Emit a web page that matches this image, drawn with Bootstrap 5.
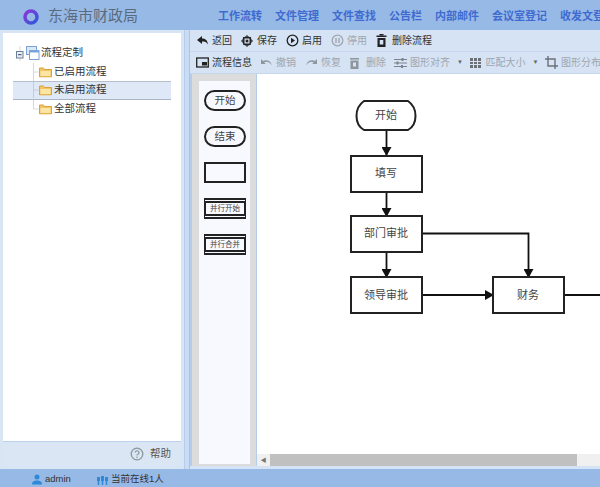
<!DOCTYPE html>
<html lang="zh-CN">
  <head>
    <meta charset="UTF-8" />
    <meta name="viewport" content="width=device-width, initial-scale=1" />
    <title>东海市财政局</title>
    <link href="https://cdn.jsdelivr.net/npm/bootstrap@5.3.3/dist/css/bootstrap.min.css" rel="stylesheet" />
    <style>
      html, body { height: 100%; overflow: hidden; }
      body { font-family: "Liberation Sans", "Noto Sans CJK SC", sans-serif; font-size: 10.5px; color: #333; background: #97b9e6; }
      .app-shell { width: 600px; height: 487px; }
      .top-bar { height: 30px; padding-top: 3px; background: #97b9e6; white-space: nowrap; }
      .logo-ring { width: 16px; height: 16px; margin-left: 23px; flex: none; }
      .site-title { width: 90px; margin-left: 9px; margin-right: 80px; flex: none; font-size: 15px; color: #5a6b80; }
      .top-links { gap: 13px; }
      .top-links a { color: #3f6bd0; font-size: 11px; font-weight: 700; text-decoration: none; }
      .work-area { height: 439px; }
      .side-panel { width: 185px; padding: 3px 3px 3px 3px; background: #d8e5f5; border-right: 1px solid #b5cdec; }
      .tree-box { background: #fff; padding-top: 11px; }
      .tree-row { height: 18.5px; padding-left: 29px; }
      .tree-root { padding-left: 13px; }
      .tree-on { background: #dfe8f6; border-top: 1px solid #b6bfcc; border-bottom: 1px solid #a9b4c4; margin-left: 10px; margin-right: 10px; padding-left: 19px; }
      .tree-row svg { flex: none; }
      .help-bar { height: 25px; background: #dbe6f4; border-top: 1px solid #bdd2ec; padding-right: 10px; color: #555; gap: 6px; }
      .split-bar { width: 5px; background: #c9dcf3; border-right: 1px solid #a8c4e8; }
      .main-panel { width: 410px; background: #d5e3f4; padding-bottom: 3px; }
      .tool-row { height: 22px; flex: none; background: #d5e3f4; border-bottom: 1px solid #c4d7ef; padding-left: 6px; white-space: nowrap; overflow: hidden; font-size: 10px; }
      .tool-item { display: inline-flex; align-items: center; flex: none; color: #333; }
      .tool-two { width: 45px; }
      .tool-four { width: 64px; }
      .tool-trash { width: 44px; }
      .tool-menu { width: 75.500px; }
      .tool-glyph { display: inline-flex; align-items: center; width: 16px; flex: none; }
      .tool-off { color: #a0a6ae; }
      .caret-mini { font-size: 6px; color: #666; margin-left: 7px; }
      .flow-body { min-height: 0; }
      .palette-col { width: 66px; flex: none; padding: 7px 6px 2px 7px; background: #dcdcdc; border-left: 2px solid #b5cdec; }
      .palette-inner { background: #f8f9fe; padding-top: 9px; gap: 15px; }
      .shape-item { width: 42px; height: 21px; margin-left: 5px; border: 2px solid #222; background: #f8f9fe; color: #444; font-size: 10.5px; }
      .shape-round { border-radius: 11px; }
      .shape-bars { border-top: 5px double #222; border-bottom: 5px double #222; font-size: 7.500px; white-space: nowrap; }
      .canvas-col { background: #fff; border-left: 1px solid #b5cdec; min-width: 0; }
      .canvas-col svg { display: block; }
      .canvas-col text { font-family: "Liberation Sans", "Noto Sans CJK SC", sans-serif; font-size: 11px; fill: #444; text-anchor: middle; }
      .scroll-line { height: 12px; flex: none; background: #f0f0f0; }
      .scroll-btn { width: 13px; font-size: 6px; color: #777; }
      .scroll-thumb { width: 307px; background: #c0c0c0; }
      .status-bar { height: 18px; padding: 3px 0 0 32px; background: #97b9e6; color: #333; font-size: 9.500px; white-space: nowrap; }
      .status-admin { width: 65px; gap: 3px; }
      .status-online { gap: 3px; }
      .status-bar svg { flex: none; }
    </style>
  </head>
  <body>
    <div class="app-shell d-flex flex-column">
      <div class="top-bar d-flex align-items-center">
        <svg class="logo-ring" viewBox="0 0 16 16"><defs><linearGradient id="ringGrad" x1="0" y1="0" x2="1" y2="1"><stop offset="0" stop-color="#8a35d8" /><stop offset="1" stop-color="#2f5bd8" /></linearGradient></defs><circle cx="8" cy="8" r="6" fill="none" stroke="url(#ringGrad)" stroke-width="3.500" /></svg>
        <span class="site-title">东海市财政局</span>
        <nav class="top-links d-flex">
          <a href="#">工作流转</a><a href="#">文件管理</a><a href="#">文件查找</a><a href="#">公告栏</a><a href="#">内部邮件</a><a href="#">会议室登记</a><a href="#">收发文登记</a>
        </nav>
      </div>

      <div class="work-area d-flex">
        <aside class="side-panel d-flex flex-column">
          <div class="tree-box flex-grow-1">
            <div class="tree-row tree-root d-flex align-items-center">
              <svg width="25" height="15" viewBox="0 0 25 15"><path d="M4 0v5M4 12v3" stroke="#d5d9de" /><rect x=".5" y="5.500" width="6.500" height="6.500" fill="#e8eef6" stroke="#6c7f96" /><path d="M2 8.700h3.500" stroke="#445" /><rect x="10.500" y=".5" width="10" height="8" fill="#dbe8f8" stroke="#7ba3da" /><rect x="13.500" y="4.500" width="9.500" height="9" fill="#fff" stroke="#7ba3da" /><path d="M13.500 5.500h9.500" stroke="#7ba3da" stroke-width="2" /></svg>
              <span>流程定制</span>
            </div>
            <div class="tree-row d-flex align-items-center">
              <svg width="22" height="18" viewBox="0 0 22 18"><path d="M1.500 0v18M1.500 9h5" stroke="#d5d9de" /><use href="#folderIcon" x="7" y="3.500" width="13" height="11" /></svg><span>已启用流程</span>
            </div>
            <div class="tree-row tree-on d-flex align-items-center">
              <svg width="22" height="16" viewBox="0 0 22 16"><path d="M1.500 0v16M1.500 8h5" stroke="#c6ccd6" /><use href="#folderIcon" x="7" y="2.500" width="13" height="11" /></svg><span>未启用流程</span>
            </div>
            <div class="tree-row d-flex align-items-center">
              <svg width="22" height="18" viewBox="0 0 22 18"><path d="M1.500 0v9M1.500 9h5" stroke="#d5d9de" /><use href="#folderIcon" x="7" y="3.500" width="13" height="11" /></svg><span>全部流程</span>
            </div>
          </div>
          <div class="help-bar d-flex align-items-center justify-content-end">
            <svg width="14" height="14" viewBox="0 0 14 14"><circle cx="7" cy="7" r="5.800" fill="none" stroke="#8d969f" stroke-width="1.300" /><path d="M5.200 5.500a1.900 1.800 0 1 1 2.700 1.700c-.6.300-.9.600-.9 1.200" fill="none" stroke="#8d969f" stroke-width="1.200" /><circle cx="7" cy="10.200" r=".8" fill="#8d969f" /></svg>
            <span>帮助</span>
          </div>
        </aside>
        <div class="split-bar"></div>

        <main class="main-panel d-flex flex-column">
          <div class="tool-row d-flex align-items-center">
            <span class="tool-item tool-two"><span class="tool-glyph"><svg width="13" height="11" viewBox="0 0 13 11"><path d="M1 5l5-4v2.500c3 0 5.500 1.500 6 6-1.500-2.500-3-3-6-3V9z" fill="#222" /></svg></span>返回</span>
            <span class="tool-item tool-two"><span class="tool-glyph"><svg width="12" height="12" viewBox="0 0 12 12"><circle cx="6" cy="6" r="4.800" fill="#222" /><path d="M6 0v12M0 6h12M2 2l8 8M10 2l-8 8" stroke="#222" stroke-dasharray="1.500 9" /><rect x="3.500" y="3.500" width="5" height="5" fill="#d5e3f4" /><rect x="4.700" y="4.700" width="2.600" height="2.600" fill="#222" /></svg></span>保存</span>
            <span class="tool-item tool-two"><span class="tool-glyph"><svg width="13" height="13" viewBox="0 0 13 13"><circle cx="6.500" cy="6.500" r="5.300" fill="none" stroke="#222" stroke-width="1.300" /><path d="M5 3.800l4 2.700-4 2.700z" fill="#222" /></svg></span>启用</span>
            <span class="tool-item tool-two tool-off"><span class="tool-glyph"><svg width="13" height="13" viewBox="0 0 13 13"><circle cx="6.500" cy="6.500" r="5.300" fill="none" stroke="#a0a6ae" stroke-width="1.300" /><path d="M5 4v5M8 4v5" stroke="#a0a6ae" stroke-width="1.400" /></svg></span>停用</span>
            <span class="tool-item"><span class="tool-glyph"><svg width="11" height="13" viewBox="0 0 11 13"><path d="M.5 1.500h10v1.500H.5zM1.500 4h8v9h-8z" fill="#222" /><rect x="3.700" y="6" width="3.600" height="4.500" fill="#d5e3f4" /><rect x="3.500" y="0" width="4" height="1.500" fill="#222" /></svg></span>删除流程</span>
          </div>
          <div class="tool-row d-flex align-items-center">
            <span class="tool-item tool-four"><span class="tool-glyph"><svg width="13" height="11" viewBox="0 0 13 11"><rect x=".7" y="1" width="11.600" height="9" fill="none" stroke="#222" stroke-width="1.300" /><rect x="6" y="5" width="5" height="3.500" fill="#222" /></svg></span>流程信息</span>
            <span class="tool-item tool-two tool-off"><span class="tool-glyph"><svg width="13" height="9" viewBox="0 0 13 9"><path d="M1 1v5h5L4 4.500c3-1.500 5.500-.5 8 3-1-5-6-6.500-9-4.500z" fill="#8f959c" /></svg></span>撤销</span>
            <span class="tool-item tool-two tool-off"><span class="tool-glyph"><svg width="13" height="9" viewBox="0 0 13 9"><path d="M12 1v5H7l2-1.500c-3-1.500-5.500-.5-8 3 1-5 6-6.500 9-4.500z" fill="#8f959c" /></svg></span>恢复</span>
            <span class="tool-item tool-trash tool-off"><span class="tool-glyph"><svg width="9" height="12" viewBox="0 0 9 12"><path d="M0 1h9v1.500H0zM.5 3.500h8V12h-8z" fill="#8f959c" /><rect x="3" y="5.500" width="3" height="4" fill="#d5e3f4" /></svg></span>删除</span>
            <span class="tool-item tool-menu tool-off"><span class="tool-glyph"><svg width="13" height="12" viewBox="0 0 13 12"><path d="M0 2.500h13M0 6h13M0 9.500h13" stroke="#7d838a" /><path d="M8.500 1v3M3.500 4.500v3M8 8v3" stroke="#7d838a" stroke-width="2" /></svg></span>图形对齐<span class="caret-mini">&#9660;</span></span>
            <span class="tool-item tool-menu tool-off"><span class="tool-glyph"><svg width="12" height="10" viewBox="0 0 12 10"><path d="M0 0h3v3H0zM4 0h3v3H4zM8 0h3v3H8zM0 4h3v2H0zM4 4h3v2H4zM8 4h3v2H8zM0 7h3v3H0zM4 7h3v3H4zM8 7h3v3H8z" fill="#6c7177" /></svg></span>匹配大小<span class="caret-mini">&#9660;</span></span>
            <span class="tool-item tool-off"><span class="tool-glyph"><svg width="13" height="13" viewBox="0 0 13 13"><path d="M3 0v10h10M0 3h10v10" fill="none" stroke="#6c7177" stroke-width="1.400" /></svg></span>图形分布</span>
          </div>

          <div class="flow-body d-flex flex-grow-1">
            <div class="palette-col d-flex">
              <div class="palette-inner flex-grow-1 d-flex flex-column">
                <div class="shape-item shape-round d-flex align-items-center justify-content-center">开始</div>
                <div class="shape-item shape-round d-flex align-items-center justify-content-center">结束</div>
                <div class="shape-item"></div>
                <div class="shape-item shape-bars d-flex align-items-center justify-content-center">并行开始</div>
                <div class="shape-item shape-bars d-flex align-items-center justify-content-center">并行合并</div>
              </div>
            </div>
            <div class="canvas-col flex-grow-1 d-flex flex-column">
              <svg class="flex-grow-1" width="343" height="380" viewBox="257 74 343 380">
                <defs>
                  <symbol id="folderIcon" viewBox="0 0 13 11"><path d="M.5 1.500h4l1 1.500h7v7.500H.5z" fill="#f3c562" stroke="#dba13a" /><path d="M1.500 4.500h10v5h-10z" fill="#fbe6a6" /></symbol>
                  <marker id="arrowEnd" markerUnits="userSpaceOnUse" markerWidth="9" markerHeight="10" refX="8" refY="5" orient="auto"><path d="M0 0l9 5-9 5z" fill="#111" /></marker>
                </defs>
                <g fill="none" stroke="#111" stroke-width="1.800">
                  <path d="M386.500 131V155" marker-end="url(#arrowEnd)" />
                  <path d="M386.500 192V216" marker-end="url(#arrowEnd)" />
                  <path d="M386.500 252V277" marker-end="url(#arrowEnd)" />
                  <path d="M422 233.500H528.500V277" marker-end="url(#arrowEnd)" />
                  <path d="M422 295H493" marker-end="url(#arrowEnd)" />
                  <path d="M565 295H600" />
                </g>
                <g fill="#fff" stroke="#222" stroke-width="2">
                  <path d="M364 101H408C418 108 418 124 408 130H364C354 124 354 108 364 101Z" />
                  <rect x="351" y="156" width="71" height="36" />
                  <rect x="351" y="216" width="71" height="36" />
                  <rect x="351" y="277" width="71" height="36" />
                  <rect x="493" y="277" width="71" height="36" />
                </g>
                <text x="386" y="119">开始</text>
                <text x="386" y="177">填写</text>
                <text x="386" y="237">部门审批</text>
                <text x="386" y="299">领导审批</text>
                <text x="528" y="299">财务</text>
              </svg>
              <div class="scroll-line d-flex">
                <span class="scroll-btn d-flex align-items-center justify-content-center">&#9664;</span>
                <span class="scroll-thumb"></span>
              </div>
            </div>
          </div>
        </main>
      </div>

      <footer class="status-bar d-flex align-items-center">
        <span class="status-admin d-flex align-items-center"><svg width="10" height="11" viewBox="0 0 10 11"><circle cx="5" cy="3" r="2.500" fill="#2e8ad8" /><path d="M0 10.500c0-3 2-4 5-4s5 1 5 4z" fill="#2e8ad8" /></svg>admin</span>
        <span class="status-online d-flex align-items-center"><svg width="11" height="10" viewBox="0 0 11 10"><path d="M0 2h3v4H2.300v4H.7V6H0zM4 1h3v5H6.300v4H4.700V6H4zM8 2h3v4h-.7v4H8.700V6H8z" fill="#2e8ad8" /></svg>当前在线1人</span>
      </footer>
    </div>
    <script src="https://cdn.jsdelivr.net/npm/bootstrap@5.3.3/dist/js/bootstrap.bundle.min.js"></script>
  </body>
</html>
